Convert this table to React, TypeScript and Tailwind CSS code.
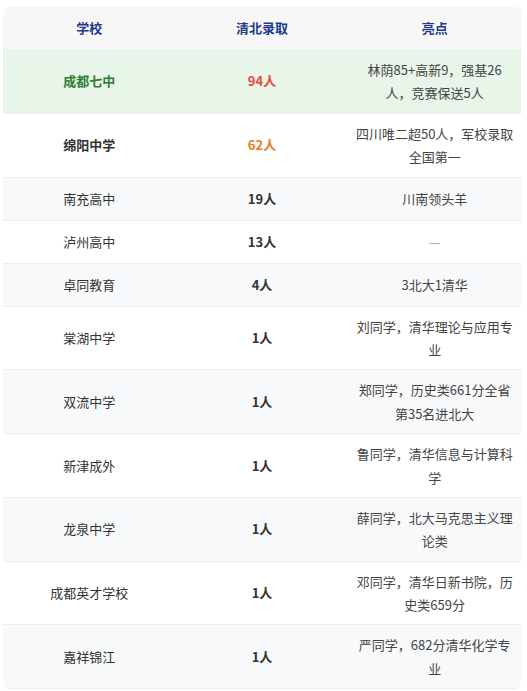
const rows: {
  school: string;
  count: string;
  note: string[];
  schoolClass?: string;
  countClass?: string;
  noteClass?: string;
}[] = [
  {
    school: "成都七中",
    count: "94人",
    note: ["林荫85+高新9，强基26", "人，竞赛保送5人"],
    schoolClass: "font-bold text-[#2e7d32]",
    countClass: "text-[#e74c3c]",
  },
  {
    school: "绵阳中学",
    count: "62人",
    note: ["四川唯二超50人，军校录取", "全国第一"],
    schoolClass: "font-bold text-[#333333]",
    countClass: "text-[#e67e22]",
  },
  { school: "南充高中", count: "19人", note: ["川南领头羊"] },
  { school: "泸州高中", count: "13人", note: ["—"], noteClass: "text-[#9a9a9a]" },
  { school: "卓同教育", count: "4人", note: ["3北大1清华"] },
  { school: "棠湖中学", count: "1人", note: ["刘同学，清华理论与应用专", "业"] },
  { school: "双流中学", count: "1人", note: ["郑同学，历史类661分全省", "第35名进北大"] },
  { school: "新津成外", count: "1人", note: ["鲁同学，清华信息与计算科", "学"] },
  { school: "龙泉中学", count: "1人", note: ["薛同学，北大马克思主义理", "论类"] },
  { school: "成都英才学校", count: "1人", note: ["邓同学，清华日新书院，历", "史类659分"] },
  { school: "嘉祥锦江", count: "1人", note: ["严同学，682分清华化学专", "业"] },
];

export default function App() {
  return (
    <div
      className="min-h-screen bg-white pt-[7px] pl-[3px]"
      style={{ fontFamily: '"Noto Sans CJK SC", "Noto Sans", sans-serif' }}
    >
      <div className="w-[518px] overflow-hidden rounded-md">
        <table className="w-full table-fixed border-collapse text-[13px]">
          <thead>
            <tr className="bg-[#f7f7f7]">
              {["学校", "清北录取", "亮点"].map((h) => (
                <th
                  key={h}
                  className="py-2 text-center font-bold leading-[26px] text-[#1e3a8a] border-b border-[#eeeeee]"
                >
                  {h}
                </th>
              ))}
            </tr>
          </thead>
          <tbody>
            {rows.map((r, i) => {
              const bg =
                i === 0 ? "bg-[#e8f5e9]" : i % 2 === 0 ? "bg-[#f8f9fa]" : "bg-white";
              return (
                <tr key={r.school} className={`${bg} border-b border-[#eeeeee]`}>
                  <td
                    className={`py-2 text-center leading-[26px] ${r.schoolClass ?? "text-[#333333]"}`}
                  >
                    {r.school}
                  </td>
                  <td
                    className={`py-2 text-center font-bold leading-[26px] ${r.countClass ?? "text-[#333333]"}`}
                  >
                    {r.count}
                  </td>
                  <td
                    className={`py-2 text-center leading-[1.8] whitespace-nowrap ${r.noteClass ?? "text-[#444444]"}`}
                  >
                    {r.note.map((line, j) => (
                      <div key={j}>{line}</div>
                    ))}
                  </td>
                </tr>
              );
            })}
          </tbody>
        </table>
      </div>
    </div>
  );
}
